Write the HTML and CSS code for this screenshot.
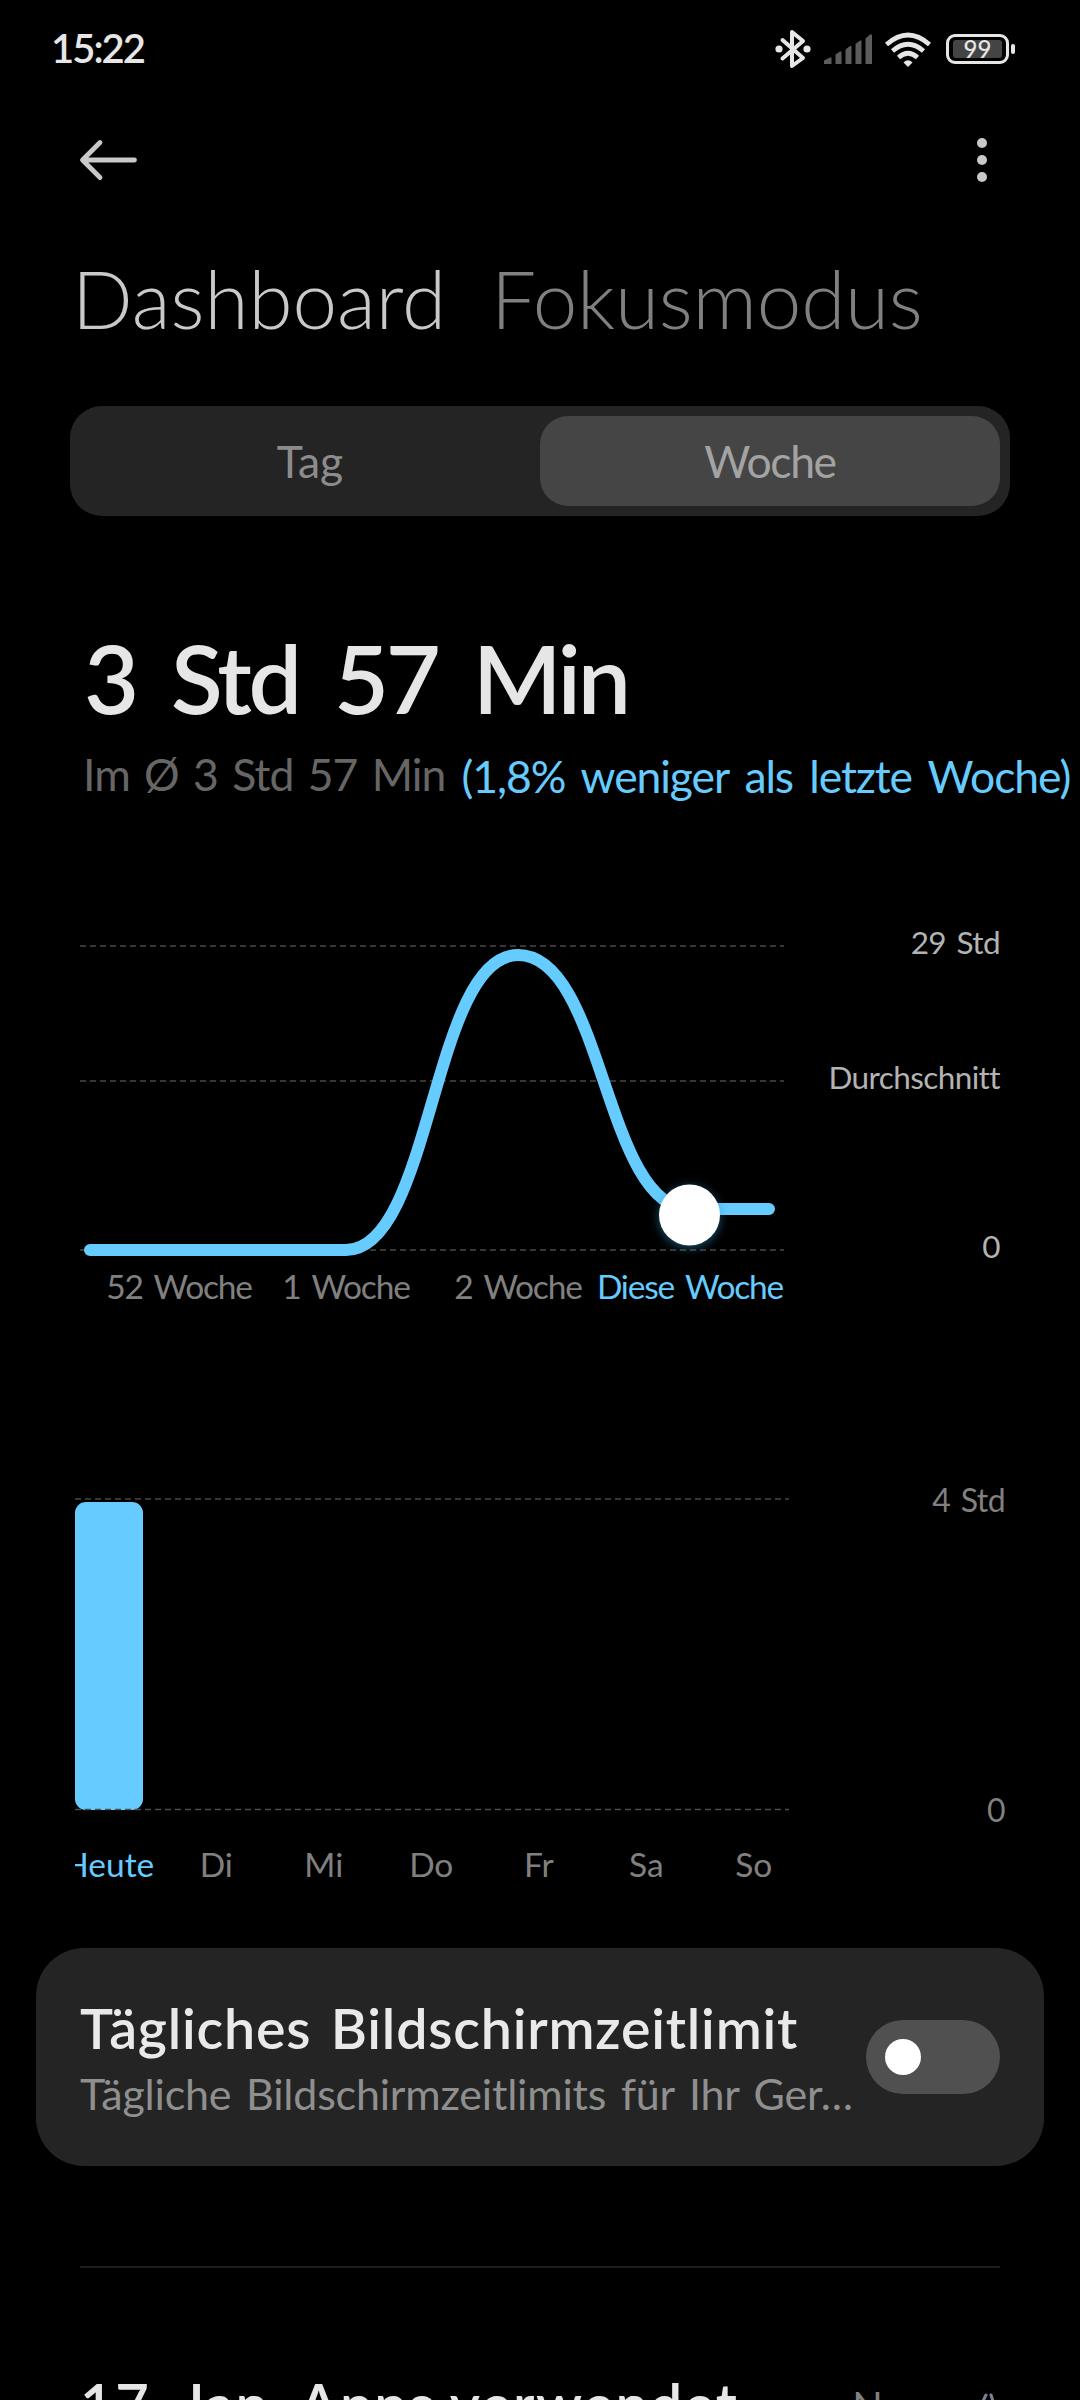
FILE: index.html
```
<!DOCTYPE html>
<html lang="de">
<head>
    <meta charset="UTF-8">
    <meta name="viewport" content="width=device-width, initial-scale=1.0">
    <title>Dashboard</title>
    <link rel="stylesheet" href="styles.css">
</head>
<body>
    <div class="screen">
        <div class="status-bar">
            <span class="time">15:22</span>
            <div class="status-icons">
                <svg class="bluetooth" width="36" height="40" viewBox="0 0 36 40">
                    <path d="M7.5 11 L28 29 L17 37 V3 L28 12 L7.5 29.5" fill="none" stroke="#e6e6e6" stroke-width="4" stroke-linejoin="round" stroke-linecap="round"/>
                    <circle cx="4" cy="20" r="3.6" fill="#e6e6e6"/>
                    <circle cx="32" cy="20" r="3.6" fill="#e6e6e6"/>
                </svg>
                <svg class="signal" width="48" height="32" viewBox="0 0 48 32" fill="#5c5c5c">
                    <path d="M0 31V27.5L6 24.5H7.5V31Z"/>
                    <path d="M11.5 31V21.5L16 18.5H17.5V31Z"/>
                    <path d="M21.5 31V16.5L26 13H27.5V31Z"/>
                    <path d="M31.5 31V11L36 7.5H37.5V31Z"/>
                    <path d="M41.5 31V5.5L46 1.5H48V31Z"/>
                </svg>
                <svg class="wifi" width="46" height="35" viewBox="0 0 46 35">
                    <g fill="none" stroke="#e6e6e6" stroke-width="4.6">
                        <path d="M1.5 12.5Q23 -6.5 44.5 12.5"/>
                        <path d="M7.5 19Q23 5.5 38.5 19"/>
                        <path d="M13.5 25.5Q23 17 32.5 25.5"/>
                    </g>
                    <path d="M18.5 30.5Q23 26 27.5 30.5L23 35Z" fill="#e6e6e6"/>
                </svg>
                <div class="battery">
                    <div class="battery-body"><div class="battery-level">99</div></div>
                    <div class="battery-tip"></div>
                </div>
            </div>
        </div>

        <div class="nav">
            <svg width="58" height="40" viewBox="0 0 58 40" fill="none" stroke="#c9c9c9" stroke-width="4.8" stroke-linecap="round" stroke-linejoin="round">
                <path d="M3 20H54.5M20 2.5L2.5 20L20 37.5"/>
            </svg>
            <svg width="10" height="44" viewBox="0 0 10 44" fill="#c9c9c9">
                <circle cx="5" cy="5" r="5"/>
                <circle cx="5" cy="22" r="5"/>
                <circle cx="5" cy="39" r="5"/>
            </svg>
        </div>

        <div class="titles">
            <span class="title-active">Dashboard</span>
            <span class="title-other">Fokusmodus</span>
        </div>

        <div class="tabs">
            <div class="tab">Tag</div>
            <div class="tab tab-active">Woche</div>
        </div>

        <div class="total">3 Std 57 Min</div>
        <div class="average">
            <span class="average-time">Im Ø 3 Std 57 Min</span>
            <span class="average-diff">(1,8% weniger als letzte Woche)</span>
        </div>

        <div class="week-chart">
            <div class="week-plot">
                <svg width="704" height="343" viewBox="80 923 704 343">
                    <defs>
                        <filter id="glow" x="-50%" y="-50%" width="200%" height="200%">
                            <feGaussianBlur stdDeviation="5"/>
                        </filter>
                    </defs>
                    <g stroke="#363636" stroke-width="2" stroke-dasharray="6 4">
                        <path d="M80 946H784"/>
                        <path d="M80 1081H784"/>
                        <path d="M80 1250H784"/>
                    </g>
                    <path d="M90 1250H346C432 1250 432 955 518 955S604 1209 690 1209H769" fill="none" stroke="#66ccff" stroke-width="12" stroke-linecap="round"/>
                    <circle cx="689.5" cy="1217" r="31" fill="#3399cc" opacity="0.5" filter="url(#glow)"/>
                    <circle cx="689.5" cy="1215" r="30.5" fill="#fff"/>
                </svg>
                <div class="week-labels">
                    <span class="week-first">52 Woche</span>
                    <span>1 Woche</span>
                    <span>2 Woche</span>
                    <span class="current">Diese Woche</span>
                </div>
            </div>
            <div class="week-scale">
                <span>29 Std</span>
                <span class="scale-average">Durchschnitt</span>
                <span class="scale-zero">0</span>
            </div>
        </div>

        <div class="day-chart">
            <div class="day-plot">
                <svg width="714" height="364" viewBox="75 1480 714 364">
                    <path d="M75 1499H789" stroke="#363636" stroke-width="2" stroke-dasharray="6 4"/>
                    <rect x="75" y="1502" width="68" height="308" rx="11" fill="#66ccff"/>
                    <path d="M75 1809.5H789" stroke="#4d4d4d" stroke-width="1.3" stroke-dasharray="6 4"/>
                </svg>
                <div class="day-labels">
                    <span class="current">Heute</span>
                    <span>Di</span>
                    <span>Mi</span>
                    <span>Do</span>
                    <span>Fr</span>
                    <span>Sa</span>
                    <span>So</span>
                </div>
            </div>
            <div class="day-scale">
                <span>4 Std</span>
                <span>0</span>
            </div>
        </div>

        <div class="limit-card">
            <div class="limit-text">
                <div class="limit-title">Tägliches Bildschirmzeitlimit</div>
                <div class="limit-info">Tägliche Bildschirmzeitlimits für Ihr Ger…</div>
            </div>
            <div class="switch"><div class="switch-thumb"></div></div>
        </div>

        <div class="divider"></div>

        <div class="apps-header">
            <span class="apps-title">17. Jan. Apps verwendet</span>
            <div class="apps-sort">
                <span>Name</span>
                <svg width="16" height="26" viewBox="0 0 16 26" fill="none" stroke="#7c8099" stroke-width="3" stroke-linecap="round">
                    <path d="M3 8L6 2M13 8L11 2M2 18L8 24L14 18"/>
                </svg>
            </div>
        </div>
    </div>
</body>
</html>
```
FILE: styles.css
```
* {
    box-sizing: border-box;
}
body {
    margin: 0;
    background: #000;
    font-family: Lato, "Open Sans", sans-serif;
    font-variant-ligatures: none;
}
svg {
    display: block;
    overflow: visible;
}
span {
    white-space: nowrap;
}
.screen {
    width: 1080px;
    height: 2400px;
    overflow: hidden;
    background: #000;
}

/* status bar */
.status-bar {
    display: flex;
    justify-content: space-between;
    align-items: center;
    height: 98px;
    padding: 0 65px 0 51px;
}
.time {
    margin-top: -2px;
    font-size: 40px;
    line-height: 40px;
    font-weight: 600;
    letter-spacing: -2px;
    color: #e6e6e6;
}
.status-icons {
    display: flex;
    align-items: center;
}
.signal {
    margin-left: 13px;
}
.wifi {
    margin-left: 13px;
}
.battery {
    display: flex;
    align-items: center;
    margin-left: 15px;
}
.battery-body {
    width: 63px;
    height: 30px;
    padding: 3px 4px;
    border: 3px solid #e6e6e6;
    border-radius: 9px;
}
.battery-level {
    height: 18px;
    border-radius: 3px;
    background: #444;
    color: #e6e6e6;
    font-size: 24px;
    line-height: 18px;
    font-weight: 500;
    text-align: center;
}
.battery-tip {
    width: 4px;
    height: 10px;
    margin-left: 2px;
    border-radius: 2px;
    background: #e6e6e6;
}

.nav {
    display: flex;
    justify-content: space-between;
    align-items: center;
    height: 124px;
    padding: 0 93px 0 80px;
}

.titles {
    display: flex;
    margin-top: 36px;
    padding-left: 72px;
    font-size: 80px;
    line-height: 80px;
    font-weight: 300;
}
.title-active {
    color: #c9c9c9;
}
.title-other {
    margin-left: 45px;
    letter-spacing: -0.2px;
    color: #808080;
}

.tabs {
    display: flex;
    height: 110px;
    margin: 68px 70px 0;
    padding: 10px;
    border-radius: 32px;
    background: #242424;
}
.tab {
    flex: 1;
    border-radius: 28px;
    text-align: center;
    font-size: 44.5px;
    line-height: 90px;
    color: #8c8c8c;
}
.tab-active {
    background: #454545;
    letter-spacing: -1.4px;
    color: #a3a3a3;
}

.total {
    margin: 114px 0 0 84px;
    font-size: 95px;
    line-height: 95px;
    font-weight: 600;
    letter-spacing: -3.4px;
    word-spacing: 15px;
    color: #e6e6e6;
}
.average {
    display: flex;
    height: 50px;
    margin: 24px 0 0 83px;
    font-size: 44.5px;
    line-height: 50px;
    letter-spacing: -0.9px;
}
.average-time {
    word-spacing: 3.7px;
    color: #666;
}
.average-diff {
    margin: 2px 0 0 16px;
    letter-spacing: -1.1px;
    word-spacing: 6px;
    color: #66ccff;
}

/* weekly line chart */
.week-chart {
    display: flex;
    justify-content: space-between;
    margin-top: 124px;
    padding: 0 80px;
}
.week-labels {
    display: grid;
    grid-template-columns: repeat(4, 172px);
    margin-left: 8px;
    font-size: 33.5px;
    line-height: 40px;
    letter-spacing: -1.2px;
    word-spacing: 4px;
    color: #808080;
}
.week-labels span,
.day-labels span {
    display: flex;
    justify-content: center;
}
.week-labels .week-first {
    padding-left: 10px;
}
.week-labels .current,
.day-labels .current {
    color: #66ccff;
}
.week-scale {
    display: flex;
    flex-direction: column;
    align-items: flex-end;
    font-size: 31.5px;
    line-height: 38px;
    letter-spacing: -0.6px;
    word-spacing: 3px;
    color: #b3b3b3;
}
.scale-average {
    margin-top: 97px;
}
.scale-zero {
    margin-top: 131px;
}

/* daily bar chart */
.day-chart {
    display: flex;
    justify-content: space-between;
    margin-top: 174px;
    padding: 0 75px;
}
.day-plot {
    width: 730px;
    overflow: hidden;
}
.day-labels {
    display: grid;
    grid-template-columns: repeat(7, 107.5px);
    margin-left: -20px;
    font-size: 33.5px;
    line-height: 40px;
    color: #808080;
}
.day-scale {
    display: flex;
    flex-direction: column;
    justify-content: space-between;
    align-items: flex-end;
    height: 349px;
    padding-top: 1px;
    font-size: 32px;
    line-height: 38px;
    letter-spacing: -0.6px;
    word-spacing: 3px;
    color: #808080;
}

/* limit card */
.limit-card {
    display: flex;
    justify-content: space-between;
    align-items: center;
    height: 218px;
    margin: 64px 36px 0;
    padding: 0 44px;
    border-radius: 48px;
    background: #242424;
}
.limit-text {
    height: 120px;
    white-space: nowrap;
}
.limit-title {
    font-size: 55.5px;
    line-height: 62px;
    font-weight: 600;
    letter-spacing: 0.8px;
    word-spacing: 5px;
    color: #e9e9e9;
}
.limit-info {
    margin-top: 10px;
    font-size: 43px;
    line-height: 50px;
    letter-spacing: -0.2px;
    word-spacing: 4px;
    color: #8f8f8f;
}
.switch {
    width: 134px;
    height: 74px;
    padding: 19px;
    border-radius: 37px;
    background: #505050;
}
.switch-thumb {
    width: 36px;
    height: 36px;
    border-radius: 50%;
    background: #fff;
}

.divider {
    height: 2px;
    margin: 100px 80px 0;
    background: #1c1c1c;
}

.apps-header {
    display: flex;
    justify-content: space-between;
    margin: 101px 80px 0;
}
.apps-title {
    font-size: 58px;
    line-height: 70px;
    font-weight: 600;
    letter-spacing: 1.5px;
    word-spacing: 0;
    color: #e6e6e6;
}
.apps-sort {
    display: flex;
    align-items: center;
    gap: 24px;
    margin-right: 4px;
    font-size: 40px;
    line-height: 74px;
    color: #808080;
}
```
